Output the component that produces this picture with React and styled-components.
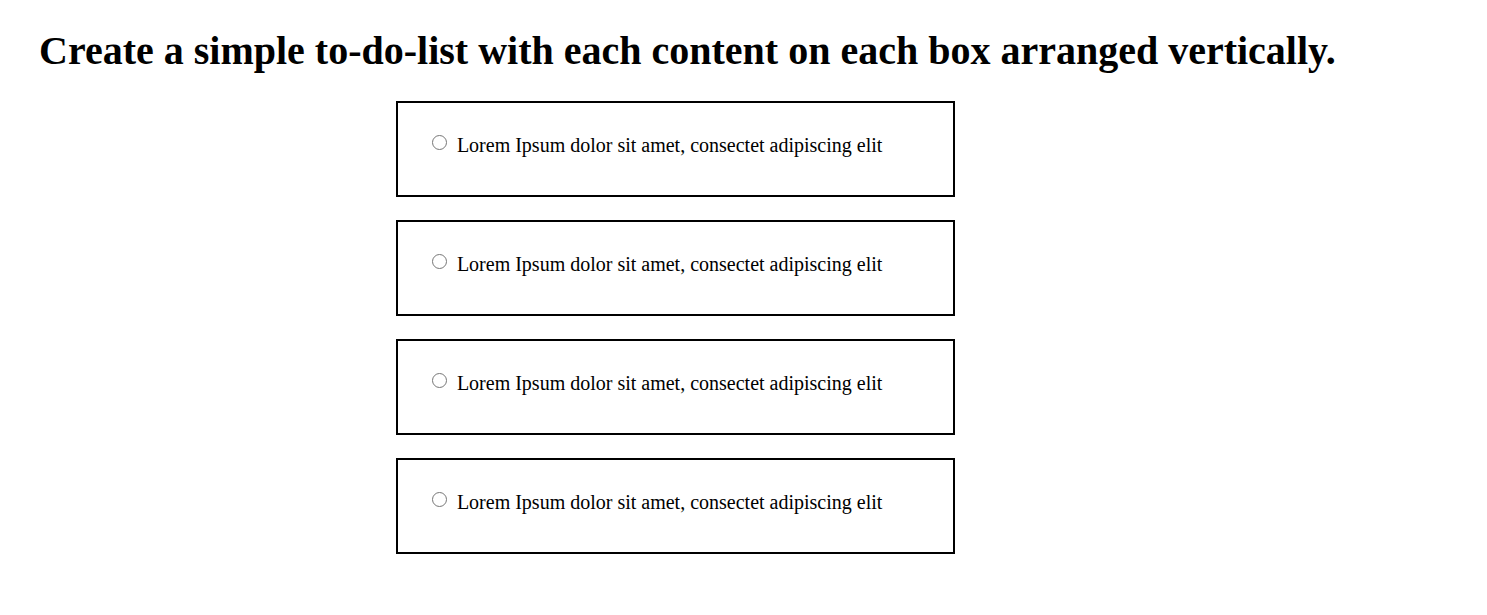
import React from "react";
import styled, { createGlobalStyle } from "styled-components";

const GlobalStyle = createGlobalStyle`
  body {
    margin: 0;
    background: #fff;
    color: #000;
    font-family: "Liberation Serif", "Times New Roman", serif;
  }
`;

const Page = styled.main`
  padding: 28px 39px;
`;

const Title = styled.h1`
  margin: 0 0 27px;
  font-size: 40px;
  line-height: 46px;
  font-weight: 700;
`;

const List = styled.ul`
  display: flex;
  flex-direction: column;
  gap: 23px;
  max-width: 559px;
  margin: 0 0 0 24vw;
  padding: 0;
  list-style: none;
`;

const Item = styled.li`
  display: flex;
  align-items: flex-start;
  gap: 10px;
  box-sizing: border-box;
  min-height: 96px;
  padding: 30px 34px;
  border: 2px solid #000;
`;

const Radio = styled.input`
  flex: none;
  width: 15px;
  height: 15px;
  margin: 2px 0 0;
`;

const Label = styled.label`
  font-size: 20px;
  line-height: 24px;
`;

const tasks = ["task-1", "task-2", "task-3", "task-4"];

export default function App() {
  return (
    <>
      <GlobalStyle />
      <Page>
        <Title>
          Create a simple to-do-list with each content on each box arranged vertically.
        </Title>
        <List>
          {tasks.map((id) => (
            <Item key={id}>
              <Radio type="radio" id={id} name={id} />
              <Label htmlFor={id}>Lorem Ipsum dolor sit amet, consectet adipiscing elit</Label>
            </Item>
          ))}
        </List>
      </Page>
    </>
  );
}
